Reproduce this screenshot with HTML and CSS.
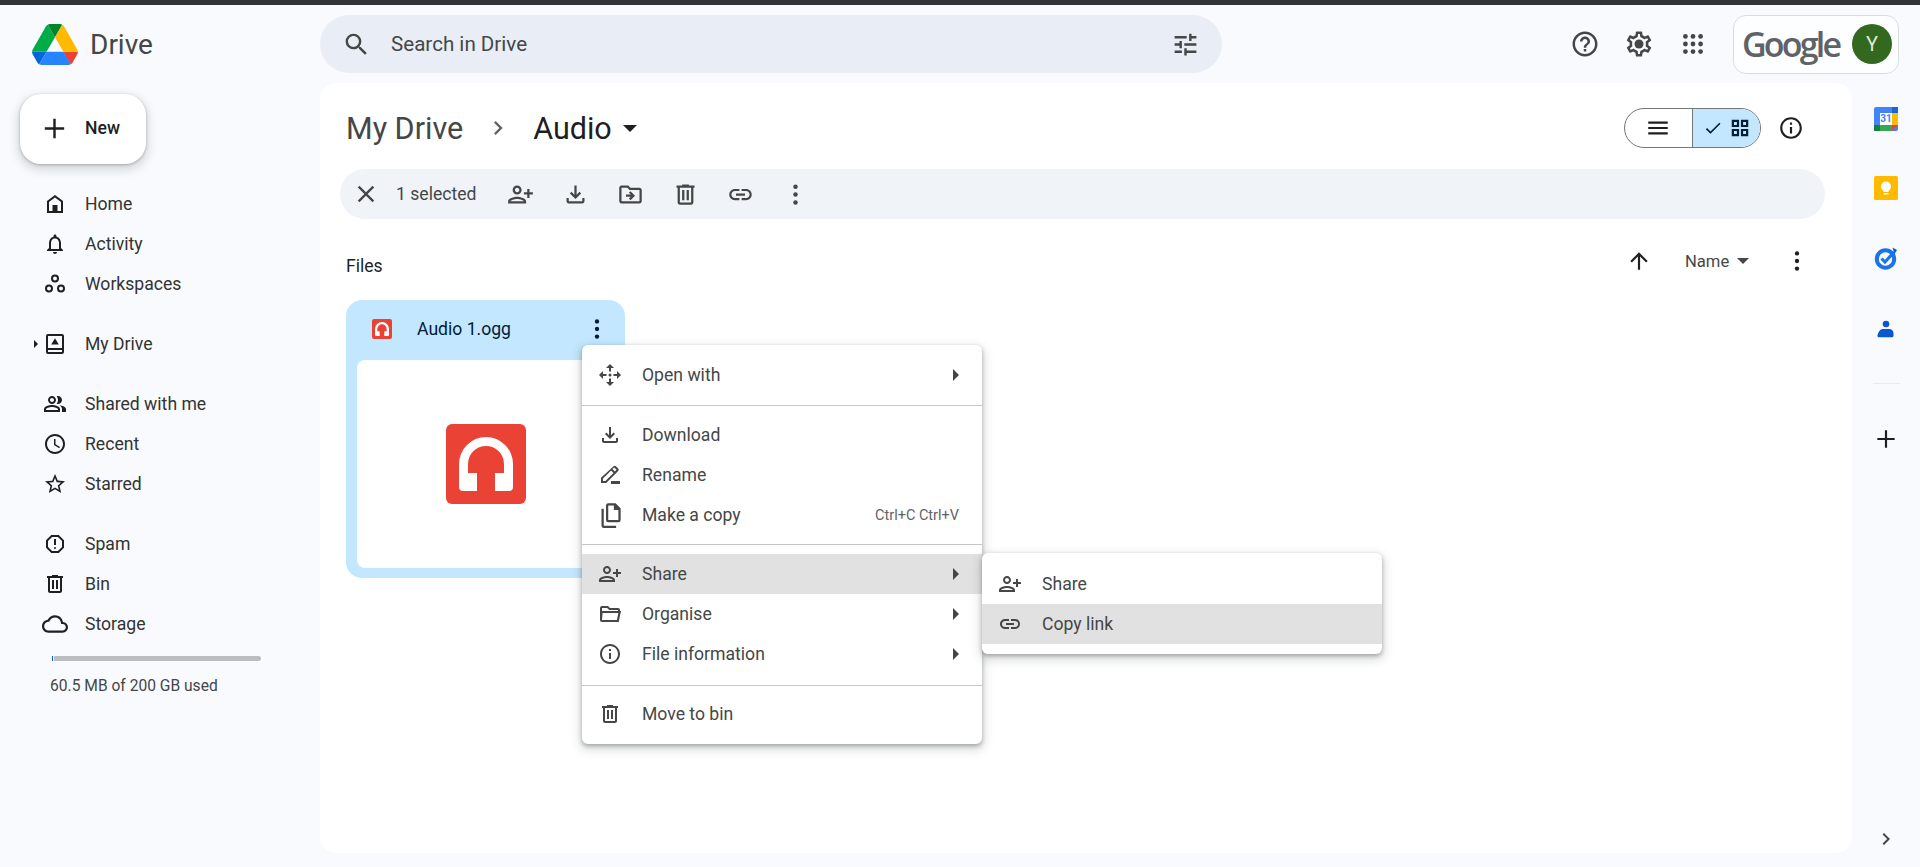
FILE: index.html
```html
<!DOCTYPE html>
<html lang="en">
<head>
<meta charset="utf-8">
<title>Audio - Google Drive</title>
<link rel="stylesheet" href="styles.css">
</head>
<body>
<svg class="sprite" aria-hidden="true">
  <symbol id="i-search" viewBox="0 0 24 24"><path d="M15.5 14h-.79l-.28-.27A6.471 6.471 0 0 0 16 9.5 6.5 6.5 0 1 0 9.5 16c1.61 0 3.09-.59 4.23-1.57l.27.28v.79l5 4.99L20.49 19l-4.99-5zm-6 0C7.01 14 5 11.99 5 9.5S7.01 5 9.5 5 14 7.01 14 9.5 11.99 14 9.5 14z"/></symbol>
  <symbol id="i-tune" viewBox="0 0 24 24"><path d="M3 17v2h6v-2H3zM3 5v2h10V5H3zm10 16v-2h8v-2h-8v-2h-2v6h2zM7 9v2H3v2h4v2h2V9H7zm14 4v-2H11v2h10zm-6-4h2V7h4V5h-4V3h-2v6z"/></symbol>
  <symbol id="i-help" viewBox="0 0 24 24"><path d="M11 18h2v-2h-2v2zm1-16C6.48 2 2 6.48 2 12s4.48 10 10 10 10-4.48 10-10S17.52 2 12 2zm0 18c-4.41 0-8-3.59-8-8s3.59-8 8-8 8 3.59 8 8-3.59 8-8 8zm0-14c-2.21 0-4 1.79-4 4h2c0-1.1.9-2 2-2s2 .9 2 2c0 2-3 1.75-3 5h2c0-2.25 3-2.5 3-5 0-2.21-1.79-4-4-4z"/></symbol>
  <symbol id="i-gear" viewBox="0 0 24 24"><path d="M19.43 12.98c.04-.32.07-.64.07-.98 0-.34-.03-.66-.07-.98l2.11-1.65c.19-.15.24-.42.12-.64l-2-3.46c-.09-.16-.26-.25-.44-.25-.06 0-.12.01-.17.03l-2.49 1c-.52-.4-1.08-.73-1.69-.98l-.38-2.65C14.46 2.18 14.25 2 14 2h-4c-.25 0-.46.18-.49.42l-.38 2.65c-.61.25-1.17.59-1.69.98l-2.49-1c-.06-.02-.12-.03-.18-.03-.17 0-.34.09-.43.25l-2 3.46c-.13.22-.07.49.12.64l2.11 1.65c-.04.32-.07.65-.07.98 0 .33.03.66.07.98l-2.11 1.65c-.19.15-.24.42-.12.64l2 3.46c.09.16.26.25.44.25.06 0 .12-.01.17-.03l2.49-1c.52.4 1.08.73 1.69.98l.38 2.65c.03.24.24.42.49.42h4c.25 0 .46-.18.49-.42l.38-2.65c.61-.25 1.17-.59 1.69-.98l2.49 1c.06.02.12.03.18.03.17 0 .34-.09.43-.25l2-3.46c.12-.22.07-.49-.12-.64l-2.11-1.65zm-1.98-1.71c.04.31.05.52.05.73 0 .21-.02.43-.05.73l-.14 1.13.89.7 1.08.84-.7 1.21-1.27-.51-1.04-.42-.9.68c-.43.32-.84.56-1.25.73l-1.06.43-.16 1.13-.2 1.35h-1.4l-.19-1.35-.16-1.13-1.06-.43c-.43-.18-.83-.41-1.23-.71l-.91-.7-1.06.43-1.27.51-.7-1.21 1.08-.84.89-.7-.14-1.13c-.03-.31-.05-.54-.05-.74s.02-.43.05-.73l.14-1.13-.89-.7-1.08-.84.7-1.21 1.27.51 1.04.42.9-.68c.43-.32.84-.56 1.25-.73l1.06-.43.16-1.13.2-1.35h1.39l.19 1.35.16 1.13 1.06.43c.43.18.83.41 1.23.71l.91.7 1.06-.43 1.27-.51.7 1.21-1.07.85-.89.7.14 1.13z"/><circle cx="12" cy="12" r="3.6"/></symbol>
  <symbol id="i-apps" viewBox="0 0 24 24"><circle cx="5" cy="5" r="2.2"/><circle cx="12" cy="5" r="2.2"/><circle cx="19" cy="5" r="2.2"/><circle cx="5" cy="12" r="2.2"/><circle cx="12" cy="12" r="2.2"/><circle cx="19" cy="12" r="2.2"/><circle cx="5" cy="19" r="2.2"/><circle cx="12" cy="19" r="2.2"/><circle cx="19" cy="19" r="2.2"/></symbol>
  <symbol id="i-plus" viewBox="0 0 24 24"><path d="M20 13h-7v7h-2v-7H4v-2h7V4h2v7h7v2z"/></symbol>
  <symbol id="i-home" viewBox="0 0 24 24"><path d="M12 3 4 9v12h16V9l-8-6zm6 16H6V10l6-4.5 6 4.500V19z"/><rect x="9.500" y="13" width="5" height="6"/></symbol>
  <symbol id="i-bell" viewBox="0 0 24 24"><path d="M12 22c1.1 0 2-.9 2-2h-4c0 1.1.9 2 2 2zm6-6v-5c0-3.07-1.63-5.64-4.5-6.32V4c0-.83-.67-1.5-1.5-1.5s-1.5.67-1.5 1.5v.68C7.64 5.36 6 7.92 6 11v5l-2 2v1h16v-1l-2-2zm-2 1H8v-6c0-2.48 1.51-4.5 4-4.5s4 2.02 4 4.5v6z"/></symbol>
  <symbol id="i-work" viewBox="0 0 24 24"><g class="ln"><circle cx="12" cy="6.500" r="3"/><circle cx="6" cy="16.500" r="3"/><circle cx="18" cy="16.500" r="3"/></g></symbol>
  <symbol id="i-mydrive" viewBox="0 0 24 24"><path d="M5 2h14a2 2 0 0 1 2 2v16a2 2 0 0 1-2 2H5a2 2 0 0 1-2-2V4a2 2 0 0 1 2-2zm0 2v12h14V4H5zm0 14v2h14v-2H5z"/><path d="m12 6.200 3.800 6.300H8.200L12 6.200z"/></symbol>
  <symbol id="i-people" viewBox="0 0 24 24"><path d="M16.670 13.130C18.040 14.060 19 15.320 19 17v3h4v-3c0-2.180-3.570-3.470-6.330-3.870zM15 12c2.210 0 4-1.790 4-4s-1.790-4-4-4c-.470 0-.910.100-1.330.240C14.500 5.270 15 6.580 15 8s-.5 2.730-1.330 3.760c.420.140.860.240 1.330.240zM9 12c2.210 0 4-1.790 4-4s-1.790-4-4-4-4 1.790-4 4 1.790 4 4 4zm0-6c1.100 0 2 .900 2 2s-.900 2-2 2-2-.900-2-2 .900-2 2-2zM9 13c-2.670 0-8 1.340-8 4v3h16v-3c0-2.660-5.330-4-8-4zm6 5H3v-.990C3.200 16.290 6.300 15 9 15s5.800 1.290 6 2v1z"/></symbol>
  <symbol id="i-clock" viewBox="0 0 24 24"><path d="M11.990 2C6.470 2 2 6.480 2 12s4.470 10 9.990 10C17.520 22 22 17.520 22 12S17.520 2 11.990 2zM12 20c-4.420 0-8-3.580-8-8s3.580-8 8-8 8 3.580 8 8-3.580 8-8 8zm.5-13H11v6l5.250 3.150.750-1.230-4.500-2.670z"/></symbol>
  <symbol id="i-star" viewBox="0 0 24 24"><path d="m22 9.240-7.190-.620L12 2 9.190 8.630 2 9.240l5.460 4.730L5.820 21 12 17.270 18.180 21l-1.630-7.030L22 9.240zM12 15.400l-3.760 2.270 1-4.280-3.320-2.880 4.380-.380L12 6.100l1.710 4.040 4.380.380-3.320 2.880 1 4.280L12 15.400z"/></symbol>
  <symbol id="i-spam" viewBox="0 0 24 24"><path d="M15.730 3H8.270L3 8.270v7.460L8.270 21h7.460L21 15.730V8.270L15.730 3zM19 14.900 14.900 19H9.100L5 14.900V9.100L9.100 5h5.800L19 9.100v5.800zM11 7h2v6h-2zM12 15a1 1 0 1 0 0 2 1 1 0 0 0 0-2z"/></symbol>
  <symbol id="i-bin" viewBox="0 0 24 24"><path d="M15 4V3H9v1H4v2h1v13c0 1.100.900 2 2 2h10c1.100 0 2-.900 2-2V6h1V4h-5zm2 15H7V6h10v13zM9 8h2v9H9zm4 0h2v9h-2z"/></symbol>
  <symbol id="i-cloud" viewBox="0 0 24 24"><path d="M19.350 10.040C18.670 6.590 15.640 4 12 4 9.110 4 6.600 5.640 5.350 8.040 2.340 8.360 0 10.910 0 14c0 3.310 2.690 6 6 6h13c2.760 0 5-2.240 5-5 0-2.640-2.050-4.780-4.650-4.960zM19 18H6c-2.210 0-4-1.790-4-4 0-2.050 1.530-3.760 3.560-3.970l1.070-.110.500-.950C8.080 7.140 9.940 6 12 6c2.620 0 4.880 1.860 5.390 4.430l.300 1.500 1.530.110c1.560.100 2.780 1.410 2.780 2.960 0 1.650-1.350 3-3 3z"/></symbol>
  <symbol id="i-close" viewBox="0 0 24 24"><path d="M19 6.410 17.590 5 12 10.590 6.410 5 5 6.410 10.590 12 5 17.590 6.410 19 12 13.410 17.590 19 19 17.590 13.410 12z"/></symbol>
  <symbol id="i-addp" viewBox="0 0 24 24"><g transform="translate(24 0) scale(-1 1)"><path d="M15 12c2.210 0 4-1.790 4-4s-1.790-4-4-4-4 1.790-4 4 1.790 4 4 4zm0-6c1.100 0 2 .900 2 2s-.900 2-2 2-2-.900-2-2 .900-2 2-2zm0 8c-2.670 0-8 1.340-8 4v2h16v-2c0-2.660-5.330-4-8-4zm-6 4c.220-.720 3.310-2 6-2 2.700 0 5.800 1.290 6 2H9zm-3-3v-3h3v-2H6V7H4v3H1v2h3v3h2z"/></g></symbol>
  <symbol id="i-down" viewBox="0 0 24 24"><path d="M18 15v3H6v-3H4v3c0 1.100.900 2 2 2h12c1.100 0 2-.900 2-2v-3h-2zm-1-4-1.410-1.410L13 12.170V4h-2v8.170L8.410 9.590 7 11l5 5 5-5z"/></symbol>
  <symbol id="i-move" viewBox="0 0 24 24"><path d="M20 6h-8l-2-2H4c-1.100 0-2 .900-2 2v12c0 1.100.900 2 2 2h16c1.100 0 2-.900 2-2V8c0-1.100-.900-2-2-2zm0 12H4V6h5.170l2 2H20v10zm-8-1 4-4-4-4-1.400 1.400 1.600 1.600H8v2h4.200l-1.600 1.600L12 17z"/></symbol>
  <symbol id="i-link" viewBox="0 0 24 24"><path d="M3.900 12c0-1.710 1.390-3.100 3.100-3.100h4V7H7c-2.760 0-5 2.240-5 5s2.240 5 5 5h4v-1.900H7c-1.710 0-3.100-1.390-3.100-3.100zM8 13h8v-2H8v2zm9-6h-4v1.900h4c1.710 0 3.100 1.390 3.100 3.100s-1.390 3.100-3.100 3.100h-4V17h4c2.760 0 5-2.240 5-5s-2.240-5-5-5z"/></symbol>
  <symbol id="i-more" viewBox="0 0 24 24"><circle cx="12" cy="5" r="2"/><circle cx="12" cy="12" r="2"/><circle cx="12" cy="19" r="2"/></symbol>
  <symbol id="i-info" viewBox="0 0 24 24"><path d="M11 7h2v2h-2zm0 4h2v6h-2zm1-9C6.480 2 2 6.480 2 12s4.480 10 10 10 10-4.480 10-10S17.520 2 12 2zm0 18c-4.410 0-8-3.590-8-8s3.590-8 8-8 8 3.590 8 8-3.590 8-8 8z"/></symbol>
  <symbol id="i-up" viewBox="0 0 24 24"><path d="m4 12 1.410 1.410L11 7.830V20h2V7.830l5.580 5.590L20 12l-8-8-8 8z"/></symbol>
  <symbol id="i-menu" viewBox="0 0 24 24"><path d="M3 18h18v-2H3v2zm0-5h18v-2H3v2zm0-7v2h18V6H3z"/></symbol>
  <symbol id="i-check" viewBox="0 0 24 24"><path d="M9 16.170 4.830 12l-1.420 1.410L9 19 21 7l-1.410-1.410z"/></symbol>
  <symbol id="i-grid" viewBox="0 0 24 24"><path d="M3 3h8v8H3V3zm2.400 2.400v3.200h3.200V5.400H5.400zM13 3h8v8h-8V3zm2.400 2.400v3.200h3.200V5.400h-3.200zM3 13h8v8H3v-8zm2.400 2.400v3.200h3.200v-3.200H5.400zM13 13h8v8h-8v-8zm2.400 2.400v3.200h3.200v-3.200h-3.200z"/></symbol>
  <symbol id="i-chev" viewBox="0 0 24 24"><path d="M8.590 16.590 13.170 12 8.590 7.410 10 6l6 6-6 6-1.410-1.410z"/></symbol>
  <symbol id="i-openwith" viewBox="0 0 24 24"><path d="m12 1 4 4H8l4-4zm0 22-4-4h8l-4 4zM1 12l4-4v8l-4-4zm22 0-4 4V8l4 4z"/><path d="M11 4h2v4.500h-2zM11 15.500h2V20h-2zM4 11h4.500v2H4zM15.500 11H20v2h-4.500z"/><circle cx="12" cy="12" r="1.500"/></symbol>
  <symbol id="i-rename" viewBox="0 0 24 24"><path d="M15.600 3.300a1.600 1.600 0 0 1 2.300 0l2.300 2.300a1.600 1.600 0 0 1 0 2.300L8.200 20H3v-5.200L15.600 3.300zM5 15.600V18h2.400L15.500 9.900l-2.400-2.400L5 15.600zM14.500 6.100l2.400 2.400 1.600-1.700-2.300-2.300-1.700 1.600z"/><rect x="13" y="18" width="9" height="3"/></symbol>
  <symbol id="i-copy" viewBox="0 0 24 24"><path d="M4 6h2v15h11v2H6a2 2 0 0 1-2-2V6zm6-5h6.500L21 5.500V16a2 2 0 0 1-2 2h-9a2 2 0 0 1-2-2V3a2 2 0 0 1 2-2zm0 2v13h9V7h-4V3h-5z"/></symbol>
  <symbol id="i-folder" viewBox="0 0 24 24"><path d="M4 4h6l2 2h8a2 2 0 0 1 2 2v1h1l-2.300 11H4a2 2 0 0 1-2-2V6a2 2 0 0 1 2-2zm0 2v3h16V8h-8.800l-2-2H4zm.6 5L4 18h14.900l1.500-7H4.600z"/></symbol>
  <symbol id="i-phones" viewBox="0 0 54 54"><path d="M0 27a27 27 0 0 1 54 0v23a4 4 0 0 1-4 4H36V36h9v-9a18 18 0 0 0-36 0v9h9v18H4a4 4 0 0 1-4-4z"/></symbol>
</svg>

<div class="topstrip"></div>
<div class="app">
  <header class="header">
    <div class="brand">
      <svg class="drive-logo" viewBox="0 0 87.300 78">
        <path d="m6.600 66.850 3.850 6.650c.8 1.400 1.950 2.500 3.300 3.300l13.750-23.800h-27.500c0 1.550.4 3.100 1.200 4.500z" fill="#0066da"/>
        <path d="m43.650 25-13.750-23.800c-1.350.8-2.500 1.900-3.300 3.300l-25.400 44a9.060 9.060 0 0 0-1.200 4.500h27.500z" fill="#00ac47"/>
        <path d="m73.550 76.800c1.350-.8 2.500-1.900 3.300-3.300l1.600-2.750 7.650-13.250c.8-1.400 1.200-2.950 1.200-4.500h-27.502l5.852 11.500z" fill="#ea4335"/>
        <path d="m43.650 25 13.750-23.800c-1.350-.8-2.900-1.200-4.500-1.200h-18.500c-1.600 0-3.150.45-4.500 1.200z" fill="#00832d"/>
        <path d="m59.800 53h-32.300l-13.750 23.800c1.350.8 2.900 1.200 4.500 1.200h50.800c1.600 0 3.150-.45 4.500-1.200z" fill="#2684fc"/>
        <path d="m73.400 26.500-12.700-22c-.8-1.400-1.950-2.500-3.300-3.300l-13.750 23.800 16.150 28h27.450c0-1.550-.4-3.100-1.200-4.500z" fill="#ffba00"/>
      </svg>
      <span class="brand-name">Drive</span>
    </div>
    <div class="search">
      <svg class="ic ic-search"><use href="#i-search"/></svg>
      <span class="search-text">Search in Drive</span>
      <svg class="ic ic-tune"><use href="#i-tune"/></svg>
    </div>
    <div class="head-actions">
      <svg class="ic head-ic"><use href="#i-help"/></svg>
      <svg class="ic head-ic"><use href="#i-gear"/></svg>
      <svg class="ic head-apps"><use href="#i-apps"/></svg>
    </div>
    <div class="account">
      <span class="google">Google</span>
      <span class="avatar">Y</span>
    </div>
  </header>

  <div class="body">
    <aside class="sidebar">
      <button class="new-btn"><svg class="ic ic-plus"><use href="#i-plus"/></svg><span>New</span></button>
      <nav class="nav">
        <ul class="nav-group">
          <li class="nav-item"><svg class="ic"><use href="#i-home"/></svg><span>Home</span></li>
          <li class="nav-item"><svg class="ic"><use href="#i-bell"/></svg><span>Activity</span></li>
          <li class="nav-item"><svg class="ic"><use href="#i-work"/></svg><span>Workspaces</span></li>
        </ul>
        <ul class="nav-group">
          <li class="nav-item nav-tree"><svg class="ic"><use href="#i-mydrive"/></svg><span>My Drive</span></li>
        </ul>
        <ul class="nav-group">
          <li class="nav-item"><svg class="ic"><use href="#i-people"/></svg><span>Shared with me</span></li>
          <li class="nav-item"><svg class="ic"><use href="#i-clock"/></svg><span>Recent</span></li>
          <li class="nav-item"><svg class="ic"><use href="#i-star"/></svg><span>Starred</span></li>
        </ul>
        <ul class="nav-group">
          <li class="nav-item"><svg class="ic"><use href="#i-spam"/></svg><span>Spam</span></li>
          <li class="nav-item"><svg class="ic"><use href="#i-bin"/></svg><span>Bin</span></li>
          <li class="nav-item"><svg class="ic ic-cloud"><use href="#i-cloud"/></svg><span>Storage</span></li>
        </ul>
      </nav>
      <div class="storage-bar"><div class="storage-fill"></div></div>
      <div class="storage-text">60.5 MB of 200 GB used</div>
    </aside>

    <main class="panel">
      <div class="crumbs">
        <span class="crumb">My Drive</span>
        <svg class="ic ic-chev"><use href="#i-chev"/></svg>
        <span class="crumb crumb-now">Audio</span>
        <span class="caret caret-big"></span>
        <div class="view-toggle">
          <span class="view-opt"><svg class="ic ic-menu"><use href="#i-menu"/></svg></span>
          <span class="view-opt view-on"><svg class="ic ic-check"><use href="#i-check"/></svg><svg class="ic ic-grid"><use href="#i-grid"/></svg></span>
        </div>
        <svg class="ic ic-info"><use href="#i-info"/></svg>
      </div>
      <div class="selbar">
        <svg class="ic sel-close"><use href="#i-close"/></svg>
        <span class="sel-count">1 selected</span>
        <svg class="ic sel-ic sel-first"><use href="#i-addp"/></svg>
        <svg class="ic sel-ic"><use href="#i-down"/></svg>
        <svg class="ic sel-ic"><use href="#i-move"/></svg>
        <svg class="ic sel-ic"><use href="#i-bin"/></svg>
        <svg class="ic sel-ic"><use href="#i-link"/></svg>
        <svg class="ic sel-ic"><use href="#i-more"/></svg>
      </div>
      <div class="files-head">
        <span class="files-label">Files</span>
        <div class="sort">
          <svg class="ic ic-up"><use href="#i-up"/></svg>
          <span class="sort-name">Name</span>
          <span class="caret caret-small"></span>
          <svg class="ic ic-sortmore"><use href="#i-more"/></svg>
        </div>
      </div>
      <article class="card">
        <div class="card-head">
          <span class="tile tile-small"><svg class="ic-white-s"><use href="#i-phones"/></svg></span>
          <span class="card-name">Audio 1.ogg</span>
          <svg class="ic ic-cardmore"><use href="#i-more"/></svg>
        </div>
        <div class="card-preview">
          <span class="tile tile-big"><svg class="ic-white-b"><use href="#i-phones"/></svg></span>
        </div>
      </article>
    </main>

    <aside class="rail">
      <svg class="rail-ic rail-cal" viewBox="0 0 24 24">
        <rect x="0" y="0" width="24" height="24" rx="2" fill="#4285f4"/>
        <rect x="18" y="0" width="6" height="6" fill="#1967d2"/>
        <rect x="18" y="6" width="6" height="12" fill="#fbbc04"/>
        <rect x="0" y="18" width="18" height="6" fill="#34a853"/>
        <rect x="0" y="18" width="6" height="6" fill="#188038"/>
        <path d="M18 18h6l-6 6z" fill="#ea4335"/>
        <rect x="6" y="6" width="12" height="12" fill="#fff"/>
        <text x="12" y="15.300" class="cal-num">31</text>
      </svg>
      <svg class="rail-ic rail-keep" viewBox="0 0 24 24">
        <rect width="24" height="24" rx="1.500" fill="#ffba00"/>
        <circle cx="12" cy="10.500" r="5" fill="#fff"/>
        <rect x="9.500" y="14" width="5" height="2" fill="#fff"/>
        <rect x="9.500" y="17" width="5" height="1.500" fill="#fff"/>
      </svg>
      <svg class="rail-ic rail-tasks" viewBox="0 0 24 24">
        <circle cx="11.500" cy="13" r="8.700" fill="none" stroke="#1a73e8" stroke-width="4"/>
        <path d="m7.500 12.500 3.500 3.500 9-10" fill="none" stroke="#1a73e8" stroke-width="3"/>
        <path d="M18.500 1.500 23 4l-2.500 4z" fill="#0b57d0"/>
      </svg>
      <svg class="rail-ic rail-contacts" viewBox="0 0 24 24">
        <circle cx="12" cy="6" r="4" fill="#0b57d0"/>
        <path d="M8 12h8a5 5 0 0 1 5 5v3a2 2 0 0 1-2 2H3.500a2 2 0 0 1-1.500-3c1-4 3-7 6-7z" fill="#0b57d0"/>
      </svg>
      <div class="rail-line"></div>
      <svg class="ic rail-plus"><use href="#i-plus"/></svg>
      <svg class="ic rail-chev"><use href="#i-chev"/></svg>
    </aside>
  </div>
</div>

<div class="menu menu-main">
  <div class="m-row"><svg class="ic"><use href="#i-openwith"/></svg><span class="m-label">Open with</span><span class="m-arrow"></span></div>
  <div class="m-sep"></div>
  <div class="m-row"><svg class="ic"><use href="#i-down"/></svg><span class="m-label">Download</span></div>
  <div class="m-row"><svg class="ic"><use href="#i-rename"/></svg><span class="m-label">Rename</span></div>
  <div class="m-row"><svg class="ic ic-copy"><use href="#i-copy"/></svg><span class="m-label">Make a copy</span><span class="m-short">Ctrl+C Ctrl+V</span></div>
  <div class="m-sep m-sep-tight"></div>
  <div class="m-row m-hot"><svg class="ic"><use href="#i-addp"/></svg><span class="m-label">Share</span><span class="m-arrow"></span></div>
  <div class="m-row"><svg class="ic"><use href="#i-folder"/></svg><span class="m-label">Organise</span><span class="m-arrow"></span></div>
  <div class="m-row"><svg class="ic"><use href="#i-info"/></svg><span class="m-label">File information</span><span class="m-arrow"></span></div>
  <div class="m-sep m-sep-low"></div>
  <div class="m-row"><svg class="ic"><use href="#i-bin"/></svg><span class="m-label">Move to bin</span></div>
</div>
<div class="menu menu-sub">
  <div class="m-row"><svg class="ic"><use href="#i-addp"/></svg><span class="m-label">Share</span></div>
  <div class="m-row m-hot"><svg class="ic"><use href="#i-link"/></svg><span class="m-label">Copy link</span></div>
</div>
</body>
</html>
```
FILE: styles.css
```css
* { box-sizing: border-box; }
html, body { margin: 0; height: 100%; }
body {
  position: relative;
  width: 1920px;
  height: 867px;
  overflow: hidden;
  background: #f8fafd;
  font-family: Roboto, "Open Sans", sans-serif;
  font-size: 17.6px;
  color: #1f1f1f;
  display: flex;
  flex-direction: column;
}
ul { list-style: none; margin: 0; padding: 0; }
.sprite { position: absolute; width: 0; height: 0; }
.ic { width: 24px; height: 24px; fill: #444746; flex: none; display: block; }
.ln { fill: none; stroke: #1f1f1f; stroke-width: 2; }

.topstrip { height: 5px; background: #323336; flex: none; }
.app { flex: 1; display: flex; flex-direction: column; min-height: 0; }

/* header */
.header { height: 78px; flex: none; display: flex; align-items: center; }
.brand { width: 320px; flex: none; display: flex; align-items: center; padding-left: 32px; }
.drive-logo { width: 46px; height: 41px; display: block; }
.brand-name { font-size: 28px; color: #444746; margin-left: 12px; }
.search {
  width: 902px; height: 58px; flex: none;
  background: #e9eef6; border-radius: 29px;
  display: flex; align-items: center; padding: 0 22px;
}
.ic-search { width: 29px; height: 29px; fill: #444746; }
.search-text { font-size: 20.6px; color: #444746; margin-left: 20px; flex: 1; }
.ic-tune { width: 29px; height: 29px; }
.head-actions { display: flex; align-items: center; gap: 24px; margin-left: 348px; }
.head-ic { width: 30px; height: 30px; }
.head-apps { width: 26px; height: 26px; margin: 0 2px; }
.account {
  margin-left: 25px; width: 166px; height: 59px; flex: none;
  border: 1px solid #dadce0; border-radius: 13px; background: #fdfeff;
  display: flex; align-items: center; justify-content: space-between;
  padding: 0 6px 0 8px;
}
.google { font-family: "Open Sans", sans-serif; font-weight: 600; font-size: 34px; letter-spacing: -2.8px; color: #5f6368; }
.avatar {
  width: 40px; height: 40px; border-radius: 50%; background: #33691e; color: #dfe8d8;
  display: flex; align-items: center; justify-content: center; font-size: 20px;
}

/* layout */
.body { flex: 1; display: flex; min-height: 0; }

/* sidebar */
.sidebar { width: 320px; flex: none; padding-top: 11px; }
.new-btn {
  margin-left: 20px; width: 126px; height: 70px; border: 0; border-radius: 21px; background: #fff;
  box-shadow: 0 1px 3px rgba(60,64,67,.35), 0 4px 8px 3px rgba(60,64,67,.15);
  display: flex; align-items: center; padding: 0 0 2px 20px;
  font: 500 17.6px Roboto, sans-serif; color: #1f1f1f;
}
.ic-plus { width: 29px; height: 29px; fill: #1f1f1f; margin-right: 16px; }
.nav { margin-top: 20px; display: flex; flex-direction: column; gap: 20px; }
.nav-item { height: 40px; display: flex; align-items: center; padding-left: 43px; color: #333; position: relative; }
.nav-item .ic { fill: #1f1f1f; margin-right: 18px; }
.nav-item .ic-cloud { width: 26px; height: 26px; margin: 0 17px 0 -1px; }
.nav-tree::before {
  content: ""; position: absolute; left: 34px; top: 16px;
  border-left: 4px solid #1f1f1f; border-top: 4px solid transparent; border-bottom: 4px solid transparent;
}
.storage-bar { margin: 12px 0 0 52px; width: 209px; height: 5px; background: #bdbdc0; border-radius: 3px; border-left: 2px solid #fbfcfe; }
.storage-fill { width: 1px; height: 5px; background: #0b57d0; margin-left: -2px; }
.storage-text { margin: 16px 0 0 50px; font-size: 15.6px; color: #444746; }

/* panel */
.panel { width: 1532px; height: 770px; flex: none; background: #fff; border-radius: 16px; padding: 0 27px 0 20px; }
.crumbs { height: 86px; display: flex; align-items: center; padding: 4px 0 0 6px; }
.crumb { font-size: 30.5px; color: #444746; }
.crumb-now { color: #1f1f1f; }
.ic-chev { width: 28px; height: 28px; margin: 0 21px; fill: #5f6368; }
.caret { width: 0; height: 0; border-left: 7px solid transparent; border-right: 7px solid transparent; border-top: 7px solid #1f1f1f; }
.caret-big { margin-left: 11px; }
.view-toggle {
  margin-left: auto; width: 137px; height: 40px; border: 1px solid #747775; border-radius: 20px;
  display: flex; overflow: hidden; margin-right: 17px;
}
.view-opt { width: 67px; display: flex; align-items: center; justify-content: center; padding-right: 1px; }
.view-on { flex: 1; background: #c2e7ff; border-left: 1px solid #747775; gap: 6px; padding-right: 0; }
.ic-menu { width: 26px; height: 26px; fill: #1f1f1f; }
.ic-check { width: 20px; height: 20px; fill: #001d35; }
.ic-grid { width: 22px; height: 22px; fill: #001d35; }
.ic-info { width: 26px; height: 26px; fill: #1f1f1f; margin-right: 21px; }

.selbar { height: 50px; background: #f0f4f9; border-radius: 25px; display: flex; align-items: center; padding-left: 12px; }
.sel-close { width: 28px; height: 28px; }
.sel-count { margin-left: 16px; width: 82px; white-space: nowrap; color: #444746; }
.sel-ic { width: 27px; height: 27px; margin-left: 28px; }
.sel-first { margin-left: 29px; }

.files-head { height: 81px; display: flex; justify-content: space-between; align-items: flex-start; padding-left: 6px; }
.files-label { margin-top: 37px; color: #1f1f1f; }
.sort { margin-top: 29px; display: flex; align-items: center; height: 26px; }
.ic-up { width: 26px; height: 26px; fill: #1f1f1f; }
.sort-name { margin-left: 33px; width: 44px; font-size: 16.6px; color: #444746; white-space: nowrap; }
.caret-small { margin-left: 8px; border-left-width: 6.5px; border-right-width: 6.5px; border-top-width: 6.5px; border-top-color: #444746; }
.ic-sortmore { width: 26px; height: 26px; fill: #1f1f1f; margin: 0 15px 0 35px; }

.card { margin-left: 6px; width: 279px; height: 278px; background: #c2e7ff; border-radius: 16px; padding: 0 11px 10px; display: flex; flex-direction: column; }
.card-head { height: 60px; flex: none; display: flex; align-items: center; padding: 0 0 2px 15px; }
.tile { background: #ea4335; display: flex; align-items: center; justify-content: center; }
.tile-small { width: 20px; height: 20px; border-radius: 2px; }
.ic-white-s { width: 14px; height: 14px; fill: #fff; }
.card-name { margin-left: 25px; color: #001d35; flex: 1; }
.ic-cardmore { width: 26px; height: 26px; fill: #001d35; margin-right: 4px; }
.card-preview { flex: 1; background: #fff; border-radius: 8px; display: flex; align-items: center; justify-content: center; }
.tile-big { width: 80px; height: 80px; border-radius: 6px; }
.ic-white-b { width: 54px; height: 54px; fill: #fff; }

/* right rail */
.rail { width: 68px; flex: 1; display: flex; flex-direction: column; align-items: center; padding: 24px 0 0; }
.rail-ic { display: block; flex: none; }
.rail-cal { width: 24px; height: 24px; }
.rail-keep { width: 24px; height: 24px; margin-top: 45px; }
.rail-tasks { width: 24px; height: 24px; margin-top: 46px; }
.rail-contacts { width: 20px; height: 20px; margin-top: 49px; }
.cal-num { font: 700 10px Roboto, sans-serif; fill: #4285f4; text-anchor: middle; }
.rail-line { width: 27px; height: 1px; background: #e8eaed; margin-top: 44px; }
.rail-plus { width: 26px; height: 26px; fill: #1f1f1f; margin-top: 42px; }
.rail-chev { margin-top: auto; margin-bottom: 16px; width: 24px; height: 24px; }

/* menus */
.menu { position: absolute; background: #fff; border-radius: 6px; box-shadow: 0 2px 4px rgba(60,64,67,.4), 0 4px 10px 3px rgba(60,64,67,.15); }
.menu-main { left: 582px; top: 345px; width: 400px; height: 399px; padding: 10px 0; }
.menu-sub { left: 982px; top: 553px; width: 400px; height: 101px; padding: 11px 0 10px; }
.m-row { height: 40px; display: flex; align-items: center; padding-left: 16px; color: #444746; }
.m-row .ic { margin-right: 20px; }
.m-row .ic-copy { width: 27px; height: 27px; margin: 0 18px 0 -1px; }
.m-label { flex: 1; }
.m-hot { background: #e1e1e1; }
.m-arrow { width: 0; height: 0; margin-right: 23px; border-left: 6px solid #444746; border-top: 6px solid transparent; border-bottom: 6px solid transparent; }
.m-short { font-size: 14.5px; color: #5f6368; margin-right: 23px; }
.m-sep { height: 20px; padding-top: 10px; }
.m-sep::before { content: ""; display: block; height: 1px; background: #c7c7c7; }
.m-sep-tight { height: 19px; padding-top: 9px; }
.m-sep-low { padding-top: 11px; }
```
